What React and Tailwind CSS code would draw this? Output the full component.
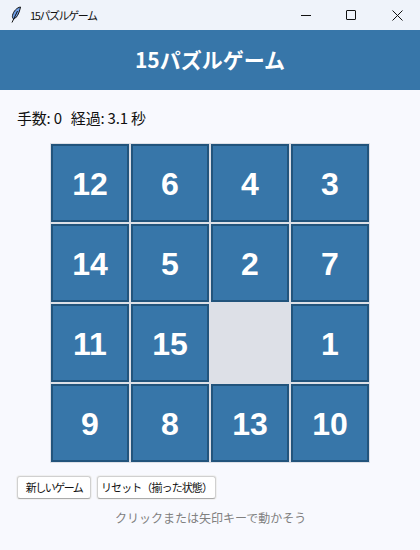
const rows = [12, 6, 4, 3, 14, 5, 2, 7, 11, 15, 0, 1, 9, 8, 13, 10];

const font = { jp: "font-['Noto_Sans_CJK_JP','Noto_Sans',sans-serif]" };

function Feather() {
  return (
    <svg width="12" height="18" viewBox="0 0 12 18" fill="none">
      <path d="M10.5 1C7 1.5 3.5 5 2.5 9.5C2.2 11 2.6 12.5 3.5 13C6 12.5 9 8.5 10.5 1Z" fill="#6f9fe8" stroke="#111" strokeWidth="1" />
      <path d="M7.5 5L2 16.5" stroke="#111" strokeWidth="1" />
    </svg>
  );
}

function TitleBar() {
  return (
    <div className="flex h-[30px] items-center bg-[#eff3fa]">
      <div className="ml-[10px] flex w-[20px] items-center">
        <Feather />
      </div>
      <span className={`${font.jp} text-[11px] tracking-[-1.4px] text-[#111]`}>15パズルゲーム</span>
      <div className="ml-auto flex items-center">
        <div className="flex h-[30px] w-[46px] items-center justify-center">
          <div className="h-px w-[10px] bg-[#111]" />
        </div>
        <div className="ml-[-1px] flex h-[30px] w-[46px] items-center justify-center">
          <div className="h-[10px] w-[10px] rounded-[1px] border border-[#111]" />
        </div>
        <div className="flex h-[30px] w-[46px] items-center justify-center">
          <svg width="11" height="11" viewBox="0 0 11 11" stroke="#111" strokeWidth="1">
            <path d="M0.5 0.5L10.5 10.5M10.5 0.5L0.5 10.5" />
          </svg>
        </div>
      </div>
    </div>
  );
}

function Tile({ value }) {
  if (!value) return <div className="h-[78px] w-[78px]" />;
  return (
    <div className="flex h-[78px] w-[78px] items-center justify-center border-2 border-[#22547c] bg-[#3776a9] pt-px font-['Liberation_Sans',sans-serif] text-[32px] font-bold text-white">
      {value}
    </div>
  );
}

export default function App() {
  return (
    <div className="flex h-[550px] w-[420px] flex-col overflow-hidden bg-[#f8f9fe]">
      <TitleBar />
      <div className={`${font.jp} flex h-[60px] items-center justify-center bg-[#3776a9] text-[21px] font-bold text-white`}>
        15パズルゲーム
      </div>

      <div className={`${font.jp} mt-[17px] ml-[17px] flex h-[22px] gap-[9px] text-[15px] leading-[22px] tracking-[-0.2px] text-[#111]`}>
        <span>手数: 0</span>
        <span>経過: 3.1 秒</span>
      </div>

      <div className="mt-[14px] ml-[50px] grid w-[320px] grid-cols-4 gap-[2px] bg-[#dde0e7] p-px">
        {rows.map((n) => (
          <Tile key={n} value={n} />
        ))}
      </div>

      <div className={`${font.jp} mt-[13px] ml-[17px] flex gap-[6px] text-[11px] whitespace-nowrap text-[#111]`}>
        <button className="h-[23px] w-[74px] rounded-[3px] border border-[#d0d0d0] border-b-[#aaaaaa] bg-white tracking-[-1.5px] shadow-[0_0_0_1px_#f0f0f0]">
          新しいゲーム
        </button>
        <button className="h-[23px] w-[119px] rounded-[3px] border border-[#d0d0d0] border-b-[#aaaaaa] bg-white tracking-[-0.9px] shadow-[0_0_0_1px_#f0f0f0]">
          リセット（揃った状態）
        </button>
      </div>

      <div className={`${font.jp} mt-[9px] ml-[115px] text-xs leading-[20px] text-[#808080]`}>
        クリックまたは矢印キーで動かそう
      </div>
    </div>
  );
}
